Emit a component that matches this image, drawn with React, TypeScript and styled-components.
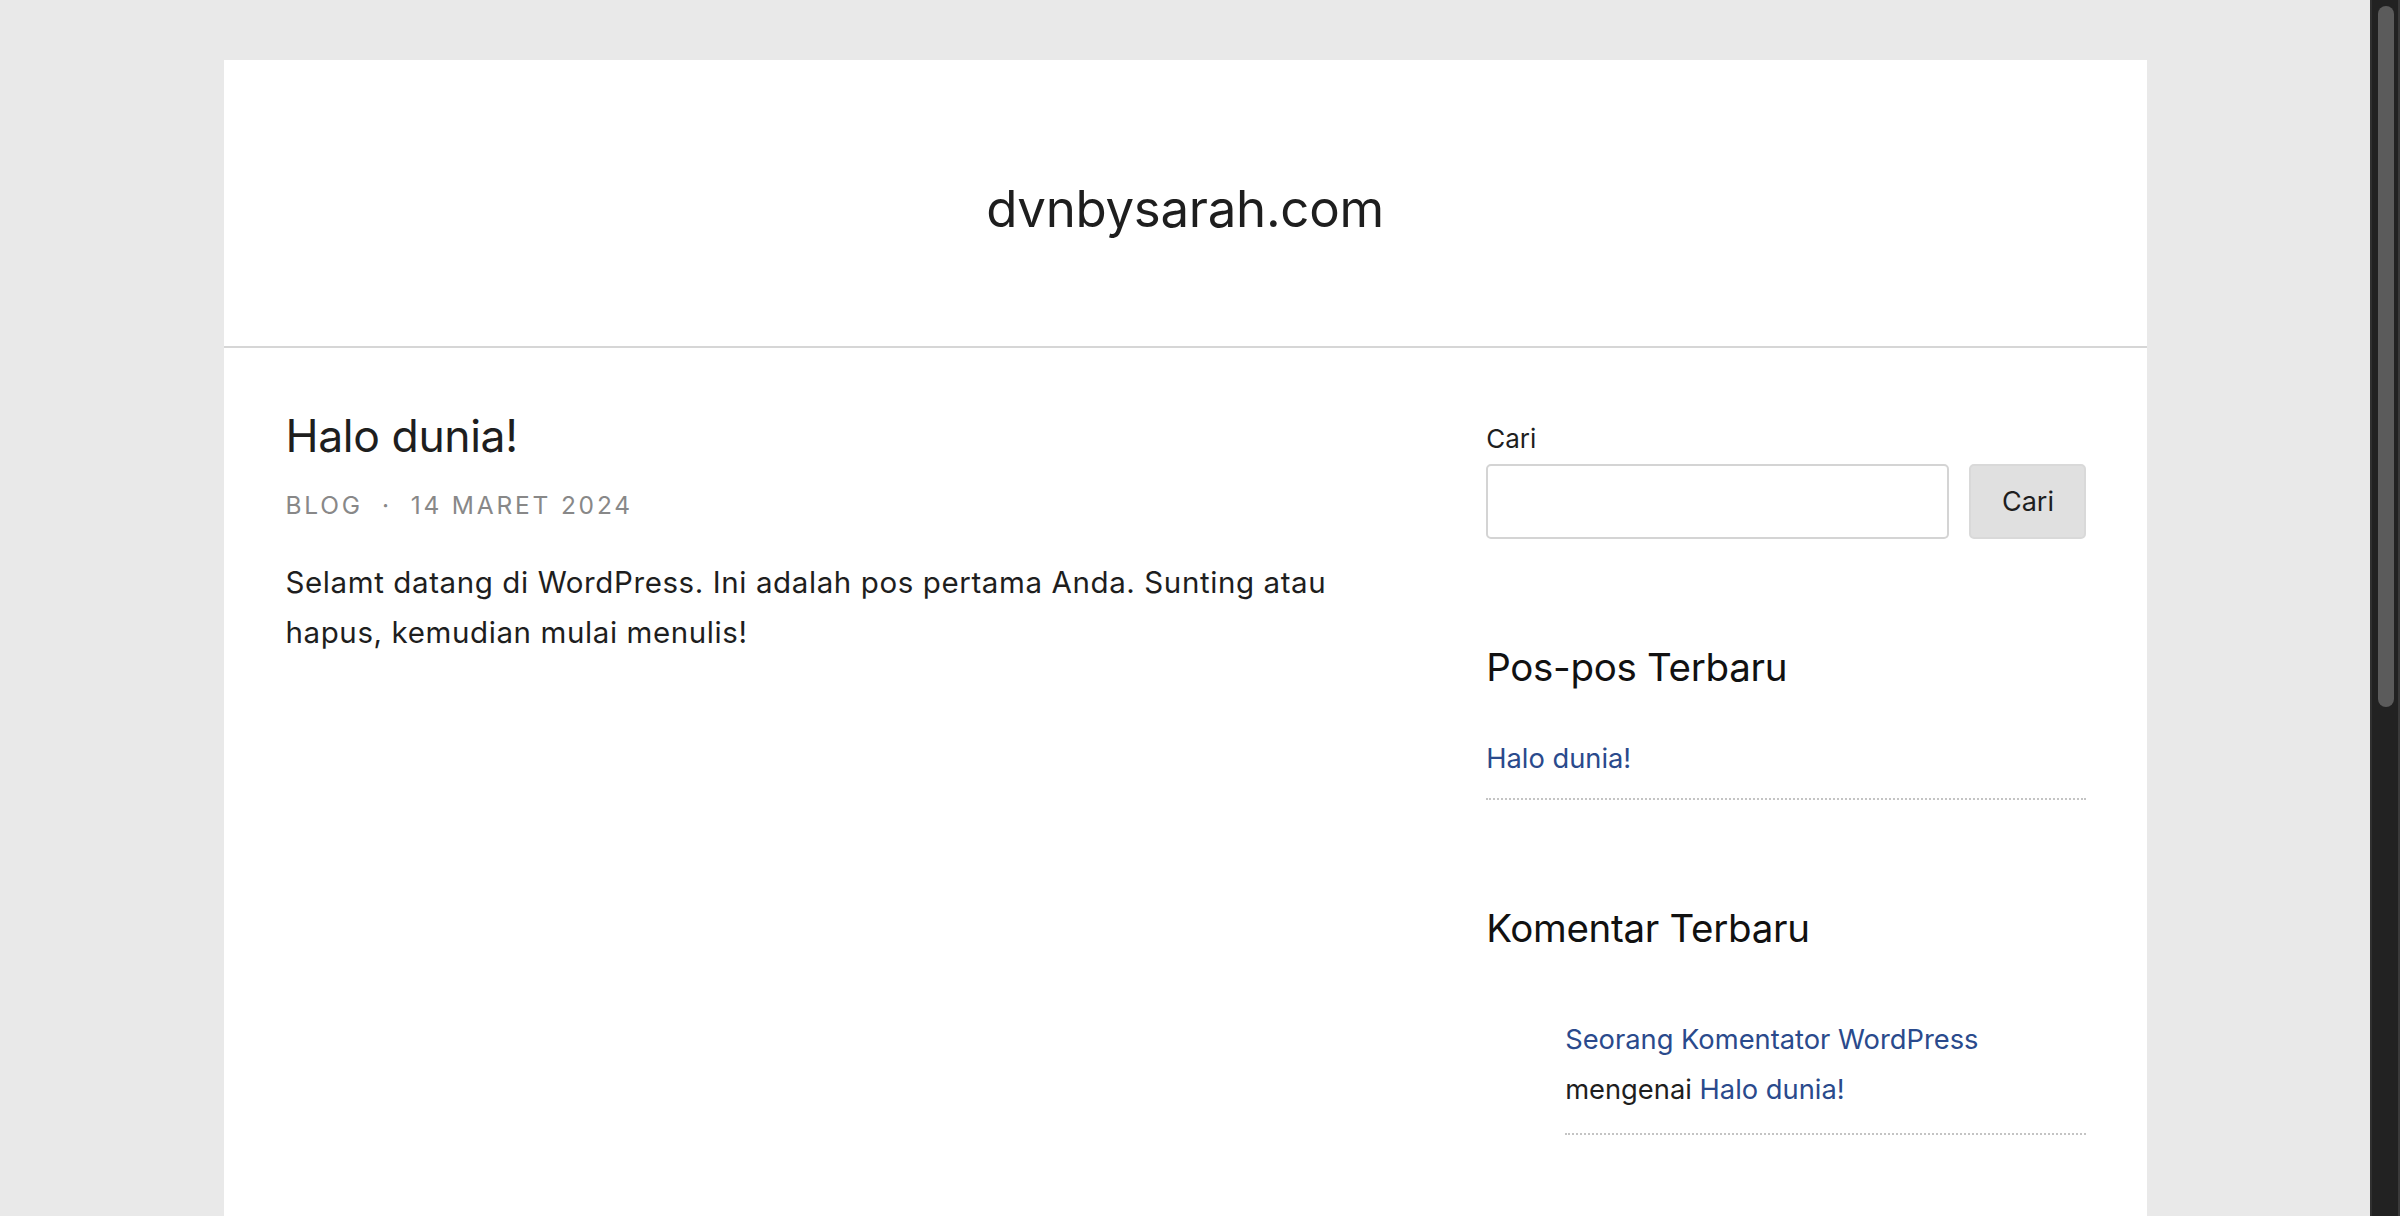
import React from "react";
import styled, { createGlobalStyle } from "styled-components";

const Global = createGlobalStyle`
  html, body { margin: 0; padding: 0; height: 100%; overflow: hidden; }
  body { font-family: Inter, "Noto Sans", "Liberation Sans", sans-serif; color: #1e1e1e; }
  * { box-sizing: border-box; }
`;

const Viewport = styled.div`
  display: flex;
  height: 1216px;
  width: 2400px;
`;

const PageArea = styled.div`
  flex: 1;
  background: #e9e9e9;
  padding-top: 60px;
  overflow: hidden;
`;

const Site = styled.div`
  width: 1923px;
  margin: 0 auto;
  background: #ffffff;
  min-height: 1200px;
`;

const Header = styled.header`
  height: 288px;
  padding-top: 12px;
  display: flex;
  align-items: center;
  justify-content: center;
  border-bottom: 2px solid #d6d6d6;
`;

const SiteTitle = styled.h1`
  margin: 0;
  font-size: 51px;
  font-weight: 400;
  line-height: 1.2;
  color: #1e1e1e;
  letter-spacing: -0.3px;
`;

const Body = styled.div`
  display: grid;
  grid-template-columns: 2fr 1fr;
  padding: 62px 60px 0 62px;
`;

const Main = styled.main`
  padding-right: 110px;
`;

const PostTitle = styled.h2`
  margin: 0;
  font-size: 44.5px;
  font-weight: 400;
  line-height: 52px;
  color: #1e1e1e;
  letter-spacing: -0.4px;
`;

const Meta = styled.div`
  margin-top: 26px;
  font-size: 24.5px;
  line-height: 34px;
  letter-spacing: 2.8px;
  text-transform: uppercase;
  color: #888888;
  display: flex;
  gap: 19px;
`;

const Content = styled.p`
  margin: 35px 0 0;
  font-size: 29.5px;
  line-height: 50px;
  letter-spacing: 0.6px;
  color: #1e1e1e;
`;

const Sidebar = styled.aside`
  display: flex;
  flex-direction: column;
`;

const Label = styled.label`
  margin-top: 11px;
  font-size: 26px;
  line-height: 36px;
  color: #1e1e1e;
`;

const SearchRow = styled.div`
  margin-top: 7px;
  display: flex;
  gap: 20px;
`;

const SearchInput = styled.input`
  flex: 1;
  height: 75px;
  border: 2px solid #d4d4d4;
  border-radius: 5px;
  background: #fff;
  font: inherit;
`;

const SearchButton = styled.button`
  width: 117px;
  height: 75px;
  border: 2px solid #d9d9d9;
  border-radius: 5px;
  background: #e0e0e0;
  font-family: Inter, "Noto Sans", sans-serif;
  font-size: 27px;
  color: #1e1e1e;
`;

const Widget = styled.section`
  margin-top: 105px;
`;

const WidgetTitle = styled.h3`
  margin: 0;
  font-size: 38.5px;
  font-weight: 400;
  line-height: 46px;
  color: #111;
  letter-spacing: -0.3px;
`;

const List = styled.ul<{ $indent?: boolean; $gap: number }>`
  list-style: none;
  margin: ${(p) => p.$gap}px 0 0;
  padding: 0 0 0 ${(p) => (p.$indent ? 79 : 0)}px;
`;

const Item = styled.li<{ $pad: number }>`
  font-size: 27.3px;
  line-height: 50px;
  color: #1e1e1e;
  padding-bottom: ${(p) => p.$pad}px;
  border-bottom: 2px dotted #c4c4c4;
`;

const Link = styled.a`
  color: #2a4a8c;
  text-decoration: none;
`;

const Scrollbar = styled.div`
  width: 30px;
  background: #222222;
  border-left: 2px solid #303030;
  border-right: 2px solid #3a3a3a;
  padding: 6px 4px 0 6px;
`;

const Thumb = styled.div`
  height: 701px;
  border-radius: 8px;
  background: #5b5b5b;
`;

export default function App() {
  return (
    <>
      <Global />
      <Viewport>
        <PageArea>
          <Site>
            <Header>
              <SiteTitle>dvnbysarah.com</SiteTitle>
            </Header>
            <Body>
              <Main>
                <PostTitle>Halo dunia!</PostTitle>
                <Meta>
                  <span>Blog</span>
                  <span>·</span>
                  <span>14 Maret 2024</span>
                </Meta>
                <Content>
                  Selamt datang di WordPress. Ini adalah pos pertama Anda. Sunting atau hapus, kemudian mulai menulis!
                </Content>
              </Main>
              <Sidebar>
                <Label htmlFor="s">Cari</Label>
                <SearchRow>
                  <SearchInput id="s" type="text" />
                  <SearchButton>Cari</SearchButton>
                </SearchRow>
                <Widget>
                  <WidgetTitle>Pos-pos Terbaru</WidgetTitle>
                  <List $gap={44}>
                    <Item $pad={14}>
                      <Link href="#">Halo dunia!</Link>
                    </Item>
                  </List>
                </Widget>
                <Widget>
                  <WidgetTitle>Komentar Terbaru</WidgetTitle>
                  <List $gap={64} $indent>
                    <Item $pad={18}>
                      <Link href="#">Seorang Komentator WordPress</Link>
                      <br />
                      mengenai <Link href="#">Halo dunia!</Link>
                    </Item>
                  </List>
                </Widget>
              </Sidebar>
            </Body>
          </Site>
        </PageArea>
        <Scrollbar>
          <Thumb />
        </Scrollbar>
      </Viewport>
    </>
  );
}
